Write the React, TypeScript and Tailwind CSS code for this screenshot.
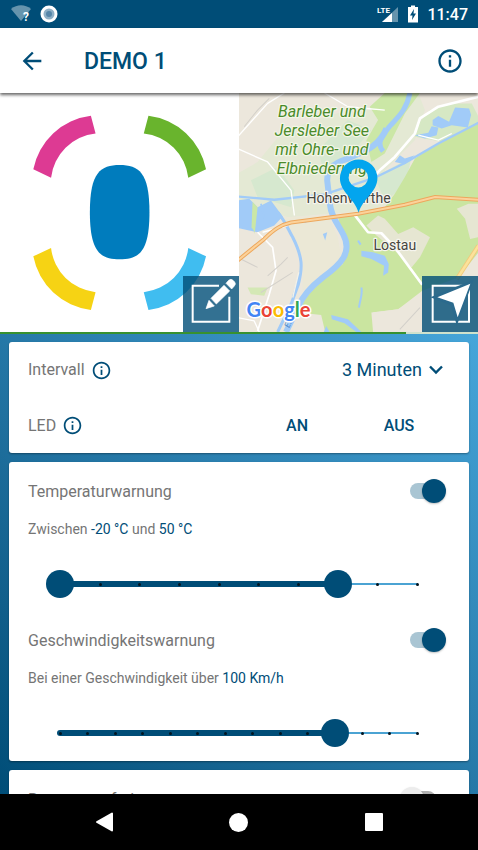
import { useState } from "react";
import type { ReactNode } from "react";
import { MdArrowBack, MdInfoOutline } from "react-icons/md";

function StatusBar() {
  return (
    <div className="flex h-7 shrink-0 items-center justify-between bg-[#004d77] px-[10px] text-white">
      <div className="flex items-center gap-[6px]">
        <svg width="24" height="22" viewBox="0 0 24 22" aria-hidden="true">
          <path d="M1 6C7 1 15 1 21 6L11 18Z" fill="#fff" opacity="0.4" />
          <text x="13" y="18" className="font-[Roboto,sans-serif] text-[12px] font-bold" fill="#fff">?</text>
        </svg>
        <svg width="18" height="18" viewBox="0 0 18 18" aria-hidden="true">
          <circle cx="9" cy="9" r="8.5" fill="#fff" />
          <circle cx="9" cy="9" r="5.5" fill="#8fb0c6" />
          <circle cx="9" cy="9" r="3" fill="#5585a8" />
        </svg>
      </div>
      <div className="flex items-center">
        <svg width="22" height="20" viewBox="0 0 22 20" aria-hidden="true">
          <path d="M22 3V18H6Z" fill="#fff" opacity="0.4" />
          <path d="M16 9V18H6Z" fill="#fff" />
          <text x="1" y="9" className="font-[Roboto,sans-serif] text-[8px] font-bold" fill="#fff">LTE</text>
        </svg>
        <svg className="ml-[9px]" width="12" height="18" viewBox="0 0 12 18" aria-hidden="true">
          <path d="M1 2H4V0.500H8V2H11V17.500H1Z" fill="#fff" />
          <path d="M7 4L3 10.500H5.500L5 15L9 8.500H6.500Z" fill="#004d77" />
        </svg>
        <span className="ml-2 pt-0.5 text-base leading-5 font-medium">11:47</span>
      </div>
    </div>
  );
}

function Header() {
  return (
    <header className="relative z-10 flex h-[65px] shrink-0 items-center bg-white pr-[14px] pl-[18px] text-[#004d77] shadow-[0_2px_3px_rgba(0,0,0,0.6)]">
      <button aria-label="Zurück">
        <MdArrowBack size={28} />
      </button>
      <h1 className="ml-[38px] flex-1 pt-0.5 text-[23px] font-medium">DEMO 1</h1>
      <button aria-label="Info">
        <MdInfoOutline size={28} />
      </button>
    </header>
  );
}

const petal = "M101 237A199 199 0 0 1 273 77L287 130A150 150 0 0 0 154 262Z";

function DevicePicture() {
  return (
    <svg className="h-full w-full" viewBox="0 9 717 714" preserveAspectRatio="xMidYMid slice" aria-hidden="true">
      <path d={petal} fill="#dd3a93" />
      <path d={petal} fill="#69b42d" transform="translate(718 0) scale(-1 1)" />
      <path d={petal} fill="#f6d314" transform="translate(0 734) scale(1 -1)" />
      <path d={petal} fill="#40bdf0" transform="translate(718 734) scale(-1 -1)" />
      <path
        d="M359 224C416 224 448 246 448 365C448 484 416 506 359 506C302 506 270 484 270 365C270 246 302 224 359 224Z"
        fill="#007cbd"
      />
    </svg>
  );
}

function MapPicture() {
  return (
    <svg className="h-full w-full" viewBox="3 9 717 714" preserveAspectRatio="xMidYMid slice" aria-hidden="true">
      <rect x="0" y="0" width="720" height="730" fill="#ece7dc" />
      <path d="M0 250L60 215L130 130L200 100L330 60L420 60L440 9H540L560 60L530 150L440 240L470 330L400 360L150 380L0 330Z" fill="#e4e9d4" />
      <path d="M40 270L120 230L170 300L160 350L60 320Z M240 180L330 90L400 120L330 200L260 250Z M410 260L520 200L500 290L440 330Z" fill="#d6e8cf" />
      <path d="M440 9H545L500 70L470 130L440 190L400 215L385 150L420 90L395 50Z" fill="#cbe7a6" />
      <path d="M575 60L630 40L700 40L720 80V110L610 155L530 140L545 95Z" fill="#d6e8c4" />
      <path
        d="M720 95L660 130L590 165L530 205L500 260L470 310L440 350L300 378L310 420L330 460L315 520L250 570L200 625L185 665L250 672L262 723H405L400 665L480 655L552 600L660 560L720 485Z"
        fill="#cae5a0"
      />
      <path d="M385 405L420 375L440 385L480 430L525 410L575 440L545 500L520 530L470 480L415 435Z" fill="#e6e6d2" />
      <path d="M655 355L690 340H720V440L695 445L680 385Z" fill="#e6e6d2" />
      <path d="M405 665L480 655L552 608V723H405Z" fill="#ece7dc" />
      <path d="M130 380L270 375L300 440L310 500L230 570L195 600L195 500Z" fill="#ebe8d6" />
      <path d="M30 590L90 590L80 615L40 610Z M40 380H60L50 430Z" fill="#d4e8b5" />

      <g fill="#a1cbf8">
        <path d="M0 330L35 325L60 350L100 330L135 378L110 405L60 425L0 412Z" />
        <path d="M583 90L600 78L632 95L650 52L692 55L698 75L688 112L640 105L610 115L583 105Z" />
        <path d="M530 135L570 128L580 108L600 112L595 135L560 145Z" />
        <path d="M370 480L405 485L440 495L452 520L450 545L435 555L438 525L400 505L370 497Z" />
        <path d="M470 215L485 195L500 205L530 195L500 222Z M255 430L268 425L262 450Z" />
        <path d="M280 672L330 685L370 723H355L320 697L282 685Z M265 705L275 723H258Z" />
      </g>
      <g fill="none" stroke="#a1cbf8" strokeLinejoin="round">
        <path d="M515 9C505 60 480 80 455 108C420 150 420 165 435 183" strokeWidth="15" />
        <path d="M445 115C420 175 370 185 330 205C280 220 268 240 268 270L276 340C280 380 300 400 315 430C345 485 310 520 255 560C210 595 190 625 180 650L145 723" strokeWidth="18" />
        <path d="M720 98L600 160L500 218L410 262L260 312L110 328L0 318" strokeWidth="7" />
        <path d="M120 365C145 395 150 415 165 440C195 500 195 530 182 580L160 640L120 723" strokeWidth="9" />
        <path d="M185 550L165 620M70 340L80 385M200 395L225 385" strokeWidth="5" />
        <path d="M370 590C375 610 365 630 363 650M360 450L368 462" strokeWidth="6" />
      </g>
      <path d="M45 335L60 350L52 425L42 410Z" fill="#cbe7a6" />
      <path d="M183 545L165 620" stroke="#f4f1e8" strokeWidth="4" />

      <g fill="none" stroke="#fff" strokeLinejoin="round">
        <path d="M720 20L600 50L545 85L530 130L470 200L430 235L400 265" strokeWidth="8" />
        <path d="M350 373L390 425L430 428L470 470L552 582" strokeWidth="8" />
        <path d="M60 425L105 470L115 540L95 610L60 720" strokeWidth="5" />
        <path d="M0 140L90 40L140 9M0 175L90 215L160 300L170 375M260 9L330 50L440 60M0 680L50 690L65 723M75 425L150 405M540 135L600 150L640 130" strokeWidth="4" />
      </g>
      <g fill="none" stroke="#d3d0ca" strokeWidth="3">
        <path d="M20 110L60 60L95 25M70 605L165 545M0 500L60 530M90 555L130 520L150 500M485 715L545 650" />
      </g>
      <path d="M0 510L80 445C110 415 130 403 160 396L360 370L500 343L590 320L720 328" fill="none" stroke="#eda75c" strokeWidth="12" />
      <path d="M0 510L80 445C110 415 130 403 160 396L360 370L500 343L590 320L720 328" fill="none" stroke="#fbd29b" strokeWidth="6" />
      <path d="M720 465L655 565" fill="none" stroke="#f2c879" strokeWidth="13" />
      <path d="M720 465L655 565" fill="none" stroke="#fbe29b" strokeWidth="8" />

      <g
        className="font-[Roboto,sans-serif] text-[48px] italic"
        textAnchor="middle"
        fill="#4a8a2a"
        stroke="#f3f6e6"
        strokeWidth="7"
        strokeLinejoin="round"
        paintOrder="stroke"
      >
        <text x="252" y="82">Barleber und</text>
        <text x="252" y="138">Jersleber See</text>
        <text x="252" y="195">mit Ohre- und</text>
        <text x="252" y="252">Elbniederung</text>
      </g>
      <g
        className="font-[Roboto,sans-serif] text-[42px]"
        textAnchor="middle"
        fill="#46443f"
        stroke="#f6f5ee"
        strokeWidth="7"
        strokeLinejoin="round"
        paintOrder="stroke"
      >
        <text x="332" y="338">Hohenwarthe</text>
        <text x="470" y="478">Lostau</text>
      </g>
      <text x="155" y="712" transform="rotate(-68 155 712)" className="font-[Roboto,sans-serif] text-[24px] italic" fill="#4b86c9">E.</text>
      <path
        d="M362 367C350 325 306 305 306 264A56 56 0 0 1 418 264C418 305 374 325 362 367ZM361 233A29 29 0 1 0 361 291A29 29 0 1 0 361 233Z"
        fill="#03a5ee"
        fillRule="evenodd"
      />
      <text
        x="27"
        y="679"
        className="font-[Lato,sans-serif] text-[60px] font-bold"
        stroke="#fff"
        strokeWidth="9"
        strokeLinejoin="round"
        paintOrder="stroke"
      >
        <tspan fill="#4285f4">G</tspan>
        <tspan fill="#ea4335">o</tspan>
        <tspan fill="#fbbc05">o</tspan>
        <tspan fill="#4285f4">g</tspan>
        <tspan fill="#34a853">l</tspan>
        <tspan fill="#ea4335">e</tspan>
      </text>
    </svg>
  );
}

function CornerButton({ label, children }: { label: string; children: ReactNode }) {
  return (
    <button aria-label={label} className="absolute right-0 bottom-0 size-[56px] bg-[#004d77]/80">
      <svg className="size-full" viewBox="0 0 168 168" aria-hidden="true">
        {children}
      </svg>
    </button>
  );
}

function Media() {
  return (
    <>
      <div className="grid h-[239px] shrink-0 grid-cols-2 bg-white">
        <div className="relative overflow-hidden">
          <DevicePicture />
          <CornerButton label="Bild bearbeiten">
            <path d="M108 29H29V137H139V62" fill="none" stroke="#fff" strokeWidth="6" />
            <path d="M69 98L78 73L94 90ZM84 67L123 28L140 45L100 84ZM129 22L137 13Q144 7 150 13L155 18Q160 24 154 30L146 39Z" fill="#fff" stroke="#fff" strokeWidth="2" strokeLinejoin="round" />
          </CornerButton>
        </div>
        <div className="relative overflow-hidden">
          <MapPicture />
          <CornerButton label="Navigation starten">
            <path d="M32 29H141V137H32Z" fill="none" stroke="#fff" strokeWidth="6" />
            <path d="M148 18L36 64L90 85L105 136Z" fill="#2b6a8d" stroke="#2b6a8d" strokeWidth="8" />
            <path d="M145 23L46 64L94 80L107 124Z" fill="#fff" />
          </CornerButton>
        </div>
      </div>
      <div role="progressbar" aria-label="Akkustand" aria-valuenow={85} className="h-0.5 shrink-0 bg-[#cfe2cc]">
        <div className="h-full w-[85%] bg-[#38912f]" />
      </div>
    </>
  );
}

function Card({ children }: { children: ReactNode }) {
  return (
    <section className="shrink-0 rounded-[3px] bg-white pr-[23px] pl-[19px] shadow-[0_1px_2px_rgba(0,0,0,0.35)]">
      {children}
    </section>
  );
}

function InfoButton({ label }: { label: string }) {
  return (
    <button aria-label={label} className="text-[#004d77]">
      <MdInfoOutline size={21} />
    </button>
  );
}

function GeneralCard() {
  return (
    <Card>
      <div className="flex h-[56px] items-center justify-between">
        <div className="flex items-center gap-[6px]">
          <label htmlFor="interval">Intervall</label>
          <InfoButton label="Info zum Intervall" />
        </div>
        <div className="relative flex items-center text-[#004d77]">
          <select id="interval" className="block appearance-none bg-transparent pr-6 text-lg leading-6">
            <option>3 Minuten</option>
          </select>
          <svg
            className="pointer-events-none absolute right-[3px]"
            width="14"
            height="10"
            viewBox="0 0 14 10"
            fill="none"
            stroke="currentColor"
            strokeWidth="2.4"
            aria-hidden="true"
          >
            <path d="M1 1.500L7 7.500L13 1.500" />
          </svg>
        </div>
      </div>
      <div className="flex h-[55px] items-center justify-between">
        <div className="flex items-center gap-[6px]">
          <span>LED</span>
          <InfoButton label="Info zur LED" />
        </div>
        <div className="-mr-1 grid w-[204px] grid-cols-2 font-medium text-[#004d77]">
          <button>AN</button>
          <button>AUS</button>
        </div>
      </div>
    </Card>
  );
}

function Switch({ id, on = false }: { id: string; on?: boolean }) {
  return (
    <input
      id={id}
      type="checkbox"
      role="switch"
      defaultChecked={on}
      className="relative h-6 w-[46px] appearance-none before:absolute before:top-1 before:left-[10px] before:h-4 before:w-[26px] before:rounded-full before:bg-[#b0b0b0] after:absolute after:top-0 after:left-0 after:size-6 after:rounded-full after:bg-[#ececec] after:shadow-[0_1px_2px_rgba(0,0,0,0.25)] checked:before:bg-[#a9c5d3] checked:after:left-[22px] checked:after:bg-[#004d77]"
    />
  );
}

function Value({ children }: { children: ReactNode }) {
  return <span className="text-[#004d77]">{children}</span>;
}

interface SliderProps {
  labels: string[];
  min: number;
  max: number;
  values: number[];
  onChange: (values: number[]) => void;
}

function Slider({ labels, min, max, values, onChange }: SliderProps) {
  const steps = (max - min) / 10;
  const percent = (value: number) => ((value - min) / (max - min)) * 100;
  const low = values.length > 1 ? percent(values[0]) : 0;
  const high = percent(values[values.length - 1]);
  return (
    <div className="relative mr-[14px] ml-[18px] grid h-7 items-center">
      <div className="relative col-start-1 row-start-1 mx-[14px] flex h-1.5 items-center">
        <div className="h-0.5 w-full bg-[#4ba3d3]" />
        <div
          className="absolute -mx-[3px] h-1.5 rounded-full bg-[#004d77]"
          style={{ left: `${low}%`, right: `${100 - high}%` }}
        />
        <div className="absolute -inset-x-px flex items-center justify-between">
          {Array.from({ length: steps + 1 }, (_, i) => (
            <span key={i} className="size-[3px] rounded-full bg-[#02141f]" />
          ))}
        </div>
      </div>
      {values.map((value, i) => (
        <input
          key={labels[i]}
          type="range"
          aria-label={labels[i]}
          min={min}
          max={max}
          step={10}
          value={value}
          onChange={(e) => onChange(values.map((v, j) => (j === i ? Number(e.target.value) : v)))}
          className="pointer-events-none relative col-start-1 row-start-1 h-7 w-full appearance-none bg-transparent [&::-webkit-slider-thumb]:pointer-events-auto [&::-webkit-slider-thumb]:size-7 [&::-webkit-slider-thumb]:appearance-none [&::-webkit-slider-thumb]:rounded-full [&::-webkit-slider-thumb]:bg-[#004d77]"
        />
      ))}
    </div>
  );
}

function SwitchRow({ id, label, on }: { id: string; label: string; on?: boolean }) {
  return (
    <div className="flex h-[57px] items-center justify-between">
      <label htmlFor={id} className="pt-0.5">{label}</label>
      <Switch id={id} on={on} />
    </div>
  );
}

function WarningsCard() {
  const [temperature, setTemperature] = useState([-20, 50]);
  const [speed, setSpeed] = useState([100]);
  return (
    <Card>
      <SwitchRow id="temperature" label="Temperaturwarnung" on />
      <p className="text-sm leading-5">
        Zwischen <Value>{temperature[0]} °C</Value> und <Value>{temperature[1]} °C</Value>
      </p>
      <div className="pt-[31px] pb-[13px]">
        <Slider labels={["Minimale Temperatur", "Maximale Temperatur"]} min={-20} max={70} values={temperature} onChange={setTemperature} />
      </div>
      <SwitchRow id="speed" label="Geschwindigkeitswarnung" on />
      <p className="text-sm leading-5">
        Bei einer Geschwindigkeit über <Value>{speed[0]} Km/h</Value>
      </p>
      <div className="pt-[31px] pb-[14px]">
        <Slider labels={["Geschwindigkeit"]} min={0} max={130} values={speed} onChange={setSpeed} />
      </div>
    </Card>
  );
}

function NavigationBar() {
  return (
    <nav className="grid h-14 shrink-0 grid-cols-3 items-center justify-items-center bg-black px-[37px]">
      <button aria-label="Zurück">
        <svg width="20" height="20" viewBox="0 0 20 20" fill="#fff" stroke="#fff" strokeWidth="2" strokeLinejoin="round">
          <path d="M3 10L18 1.500V18.500Z" />
        </svg>
      </button>
      <button aria-label="Startseite" className="size-[19px] rounded-full bg-white" />
      <button aria-label="Übersicht" className="size-[18px] rounded-[1px] bg-white" />
    </nav>
  );
}

export default function App() {
  return (
    <div className="flex h-screen flex-col overflow-hidden bg-black font-[Roboto,sans-serif] text-base leading-6 text-[#757575]">
      <StatusBar />
      <Header />
      <Media />
      <main className="flex min-h-0 flex-1 flex-col gap-[9px] overflow-hidden bg-linear-to-tr from-[#004d77] to-[#46a6da] px-[9px] pt-2">
        <GeneralCard />
        <WarningsCard />
        <Card>
          <SwitchRow id="motion" label="Bewegungsfrei" />
        </Card>
      </main>
      <NavigationBar />
    </div>
  );
}
